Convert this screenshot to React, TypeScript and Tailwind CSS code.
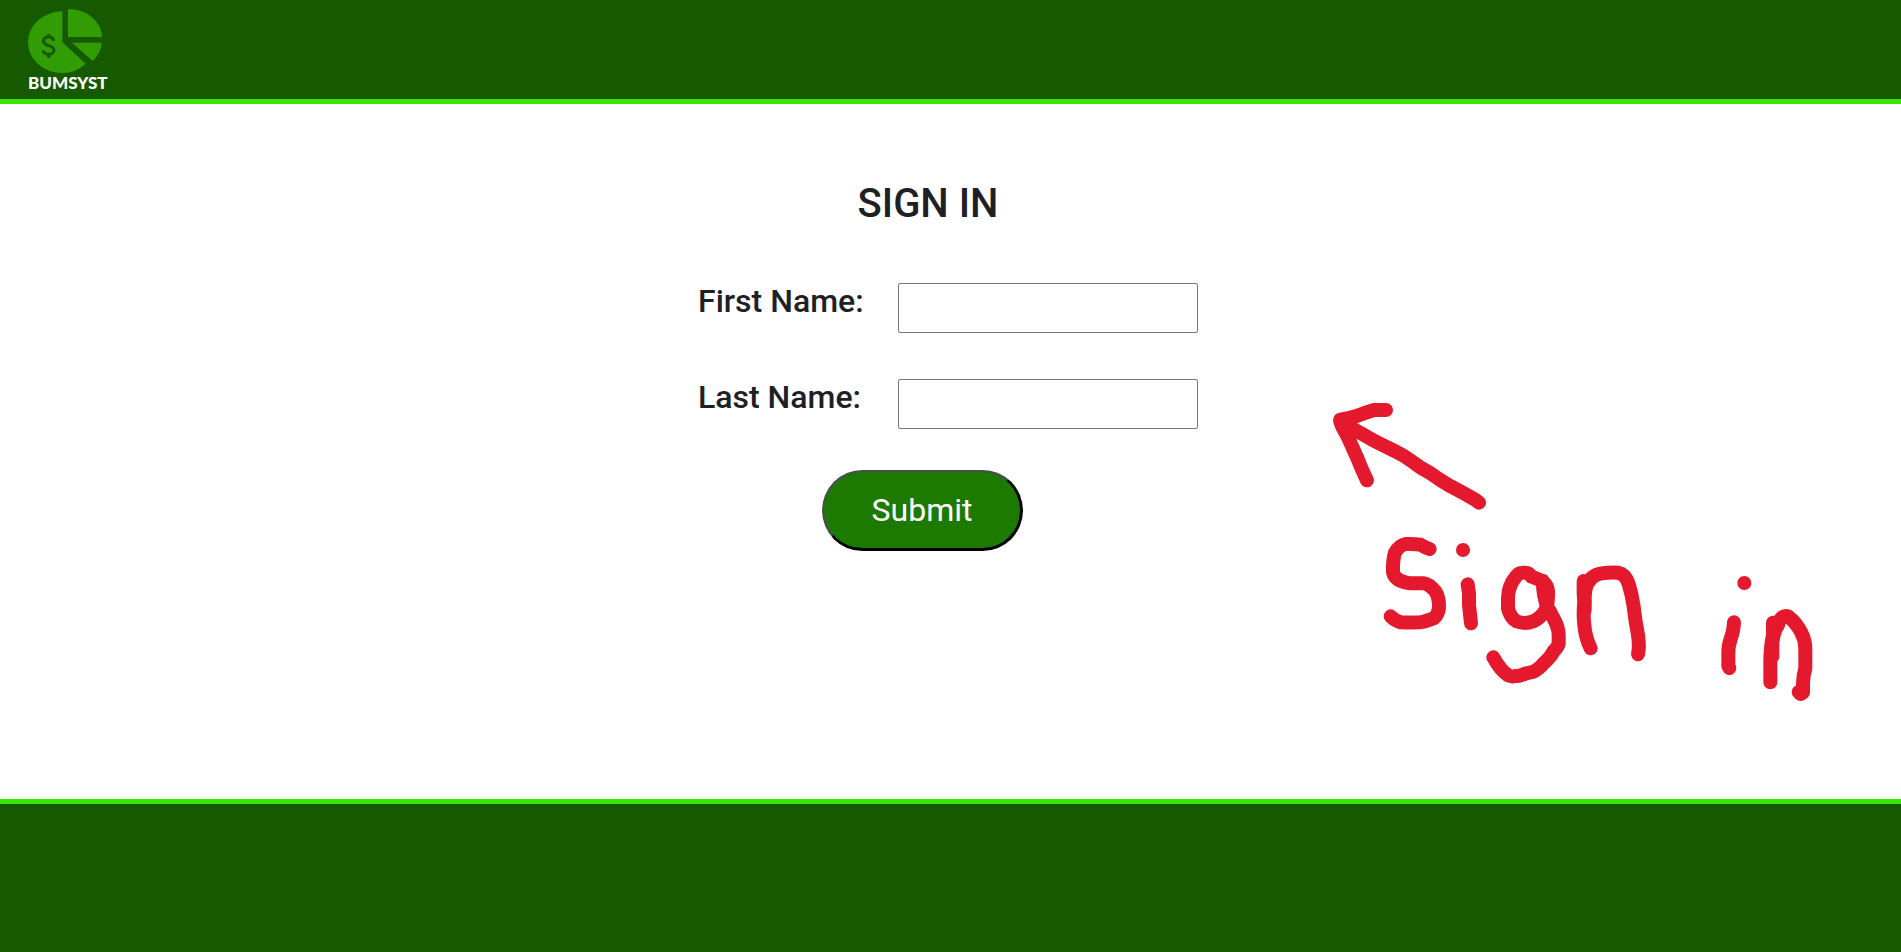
import React from "react";

function PieLogo() {
  return (
    <svg viewBox="84 27 222 192" className="h-16 w-[74px]" aria-hidden="true">
      <g fill="#319c03">
        <path d="M187 34V126L257 191Q227 219 187 219A102 92 0 0 1 84 126A103 93 0 0 1 187 34Z" />
        <path d="M204 27A102 85 0 0 1 306 111H204Z" />
        <path d="M216 128H306Q302 160 278 183Z" />
      </g>
      <path
        d="M161 123C159 107 130 107 130 123C130 140 162 134 162 150C161 167 132 167 129 151M146 102V112M146 162V174"
        fill="none"
        stroke="#155a00"
        strokeWidth="9"
      />
    </svg>
  );
}

function HandwrittenNote() {
  return (
    <svg
      viewBox="0 0 1560 990"
      className="pointer-events-none absolute top-[276px] right-[71px] h-[330px] w-[520px]"
      role="img"
      aria-label="Sign in"
      fill="none"
      stroke="#e4192d"
      strokeWidth="42"
      strokeLinecap="round"
      strokeLinejoin="round"
    >
      <path d="M228 90H192Q165 98 140 108Q115 116 91 119Q90 127 98 143Q110 163 118 181Q132 212 144 239Q154 266 171 301" />
      <path d="M91 123Q120 142 153 160Q200 188 232 202Q260 215 282 228Q308 245 332 263L362 280Q392 302 422 319Q455 336 495 359L507 368" />
      <path d="M359 507Q347 504 331 494Q312 491 287 492Q267 496 255 518Q248 540 249 576Q254 604 302 610H342Q359 613 376 634Q388 652 387 684Q384 705 371 715Q354 722 341 725Q328 729 272 727Q254 721 242 709" />
      <path d="M459 510h.1M473 613L477 640V675L483 730" />
      <path d="M664 590Q658 577 642 578Q626 577 619 588Q594 618 594 655V685Q600 711 619 724Q645 734 670 724Q684 718 700 700Q714 682 714 648Q716 625 706 612Q696 601 672 593M698 602Q700 650 712 681Q723 698 730 714Q746 742 746 765V792Q740 806 732 812Q722 832 702 849Q684 870 668 876L648 880Q630 889 611 889Q602 890 594 886Q571 870 550 832" />
      <path d="M821 603V642L823 665Q819 704 823 735Q826 773 842 805" />
      <path d="M824 690V650Q825 600 860 584Q883 576 924 578Q946 582 956 612Q966 644 971 680Q976 724 984 765Q989 800 984 823" />
      <path d="M1303 609h.1M1272 727Q1270 757 1262 777Q1254 799 1255 825V857L1258 864" />
      <path d="M1389 728V765Q1381 800 1381 850V907M1387 830V790Q1390 755 1404 735Q1412 704 1434 709Q1459 728 1474 758Q1486 782 1486 805V865Q1479 889 1479 912V938" />
      <path d="M1466 936L1472 942" />
    </svg>
  );
}

function NameField({ id, label }: { id: string; label: string }) {
  return (
    <div className="flex items-start">
      <label htmlFor={id} className="w-[201px] shrink-0 pl-px text-[32px] leading-9 font-medium">
        {label}
      </label>
      <input
        id={id}
        name={id}
        type="text"
        className="h-[50px] w-[300px] rounded-xs border border-[#767676] bg-white px-2 text-2xl"
      />
    </div>
  );
}

export default function App() {
  return (
    <div className="flex min-h-screen flex-col bg-[#155a00] font-['Roboto',sans-serif] text-[#1d2125]">
      <header className="border-b-5 border-[#38e602] px-7 pt-[9px]">
        <a href="/" className="flex h-[90px] w-fit flex-col text-white">
          <PieLogo />
          <span className="font-['Lato',sans-serif] text-[17px] leading-5 font-black">BUMSYST</span>
        </a>
      </header>

      <main className="relative flex h-[695px] flex-col items-center overflow-hidden bg-white pt-[76px]">
        <form className="flex w-[507px] flex-col" onSubmit={(event) => event.preventDefault()}>
          <h1 className="w-[462px] text-center text-[40px] leading-12 font-medium">SIGN IN</h1>
          <div className="mt-[55px] flex flex-col gap-[46px]">
            <NameField id="first-name" label="First Name:" />
            <NameField id="last-name" label="Last Name:" />
          </div>
          <button
            type="submit"
            className="mt-[41px] ml-[125px] h-[81px] w-[201px] rounded-full border-2 border-r-3 border-b-3 border-t-[#4c4c4c] border-r-black border-b-black border-l-[#4c4c4c] bg-[#1c7a00] text-[32px] text-white"
          >
            Submit
          </button>
        </form>
        <HandwrittenNote />
      </main>

      <footer className="grow border-t-5 border-[#38e602]" />
    </div>
  );
}
